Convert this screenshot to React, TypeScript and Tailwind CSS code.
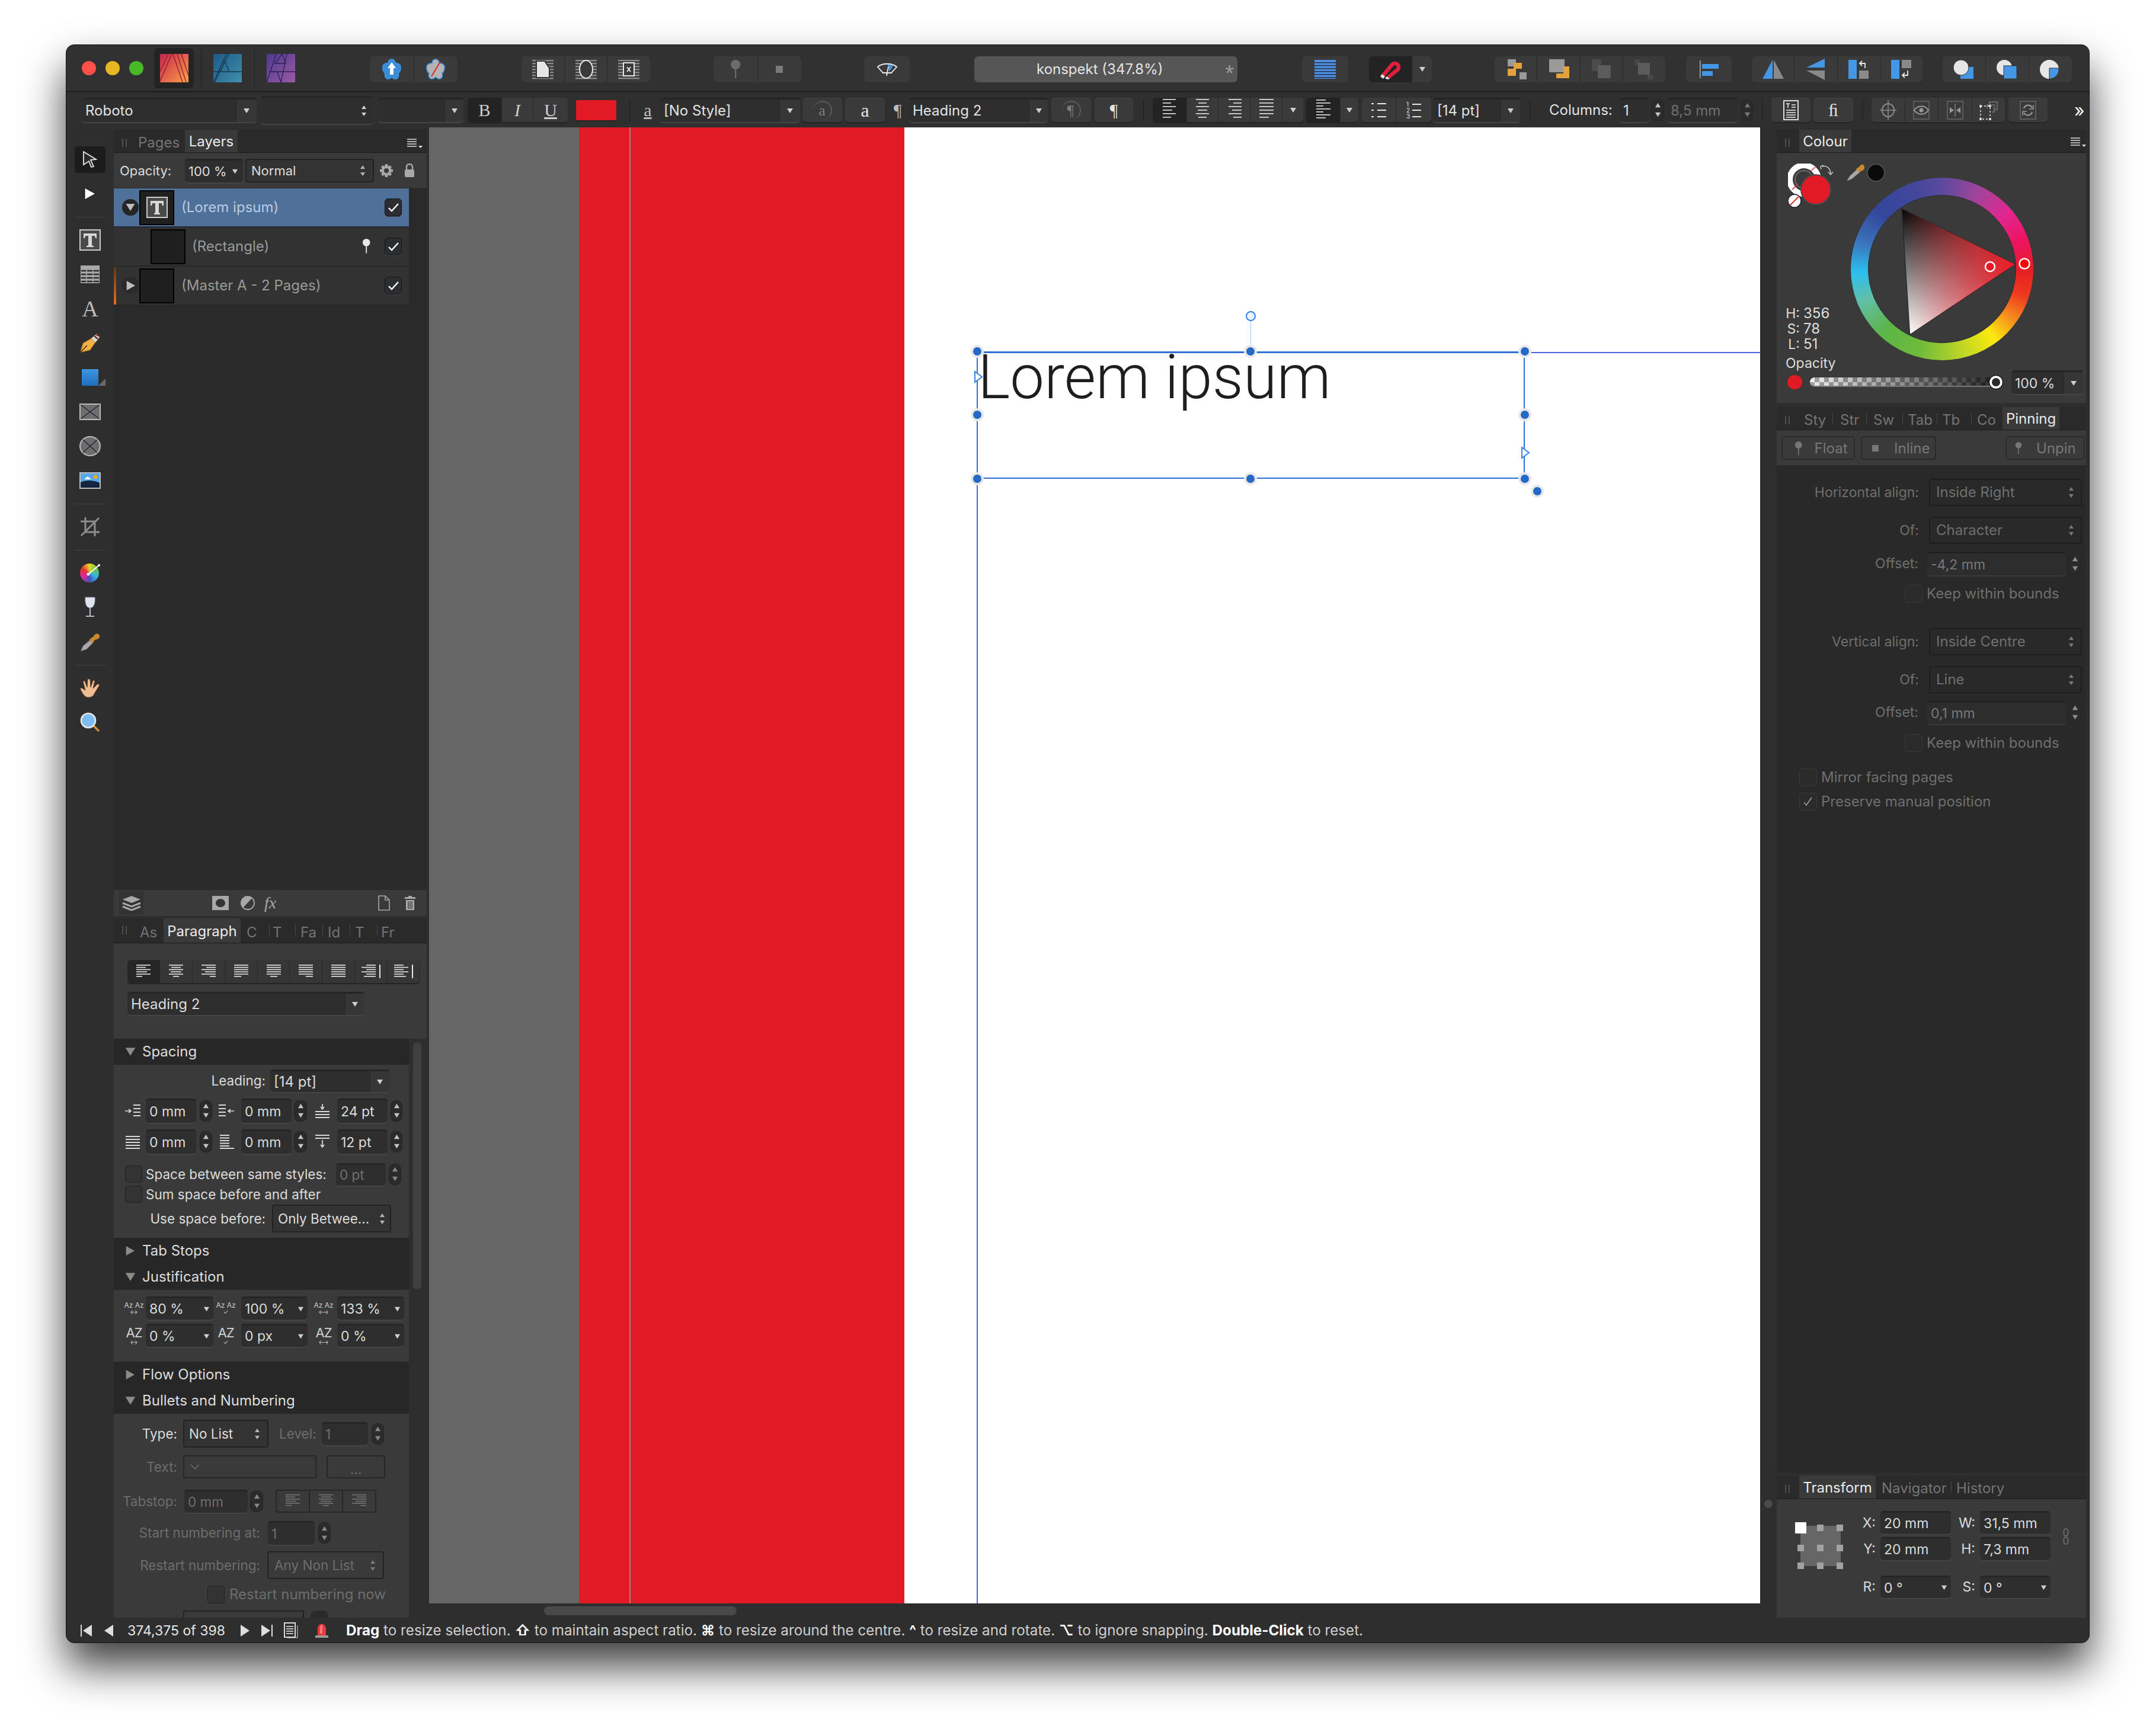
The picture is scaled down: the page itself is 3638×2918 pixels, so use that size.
import React from "react";

// small shared bits
const Tri = ({ className = "", up = false, c = "#cfcfcf", s = 12 }: any) => (
  <svg width={s} height={s} viewBox="0 0 12 12" className={className}>
    <path d={up ? "M6 2 L11 10 L1 10 Z" : "M1 2 L11 2 L6 10 Z"} fill={c} />
  </svg>
);

const Side = ({ c = "#bdbdbd", s = 20 }: any) => (
  <svg width={s} height={s} viewBox="0 0 20 20">
    <path d="M3 1 L19 10 L3 19 Z" fill={c} />
  </svg>
);

const Updown = ({ c = "#cfcfcf" }: any) => (
  <svg width="10" height="22" viewBox="0 0 10 22">
    <path d="M5 2 L9 8 L1 8 Z M1 14 L9 14 L5 20 Z" fill={c} />
  </svg>
);

const Stepper = ({ className = "", c = "#c4c4c4" }: any) => (
  <div className={"flex flex-col items-center justify-center gap-[5px] rounded-[9px] bg-[#2b2b2b] border border-[#242424] h-[36px] " + className}>
    <Tri up c={c} s={11} />
    <Tri c={c} s={11} />
  </div>
);

const Well = ({ className = "", children }: any) => (
  <div className={"flex items-center rounded-[5px] bg-[#2e2e2e] border-t-[3px] border-[#252525] shadow-[0_2px_0_#454545] overflow-hidden whitespace-nowrap " + className}>
    {children}
  </div>
);

const DropBox = ({ className = "", text, arrow = "w-[33px]", c = "" }: any) => (
  <Well className={className}>
    <span className={"flex-1 pl-[6px] " + c}>{text}</span>
    <span className={"flex h-full items-center justify-center bg-[#363636] border-l border-[#262626] " + arrow}><Tri /></span>
  </Well>
);

const Pop = ({ className = "", text, c = "" }: any) => (
  <div className={"flex items-center justify-between rounded-[4px] border-[2px] border-[#222] bg-[#333] pl-[8px] pr-[12px] whitespace-nowrap " + className}>
    <span className={c}>{text}</span>
    <Updown c="#b5b5b5" />
  </div>
);

const Check = ({ className = "", on = false, c = "#fff" }: any) => (
  <div className={"flex shrink-0 items-center justify-center rounded-[5px] bg-[#333] border border-[#202020] " + className}>
    {on && (
      <svg width="20" height="16" viewBox="0 0 20 16">
        <path d="M2 9 L7 14 L18 2" stroke={c} strokeWidth="2.4" fill="none" />
      </svg>
    )}
  </div>
);

const Pin = ({ c = "#e8e8e8", s = 1 }: any) => (
  <svg width={16 * s} height={28 * s} viewBox="0 0 16 28">
    <circle cx="8" cy="7" r="7" fill={c} />
    <rect x="7" y="12" width="2" height="15" fill={c} />
  </svg>
);

const Seg = ({ className = "", children, dark = false, last = false }: any) => (
  <div className={"flex h-full items-center justify-center " + (dark ? "bg-[#232323] " : "bg-[#3a3a3a] ") + (last ? "" : "border-r border-[#2a2a2a] ") + className}>
    {children}
  </div>
);

const TopGroup = ({ className = "", children }: any) => (
  <div className={"mt-[4px] flex h-[44px] overflow-hidden rounded-[7px] " + className}>{children}</div>
);

const LowBtn = ({ className = "", children }: any) => (
  <div className={"flex h-[41px] items-center justify-center rounded-[5px] bg-[#3a3a3a] border-t border-[#444] shadow-[0_2px_0_#242424] " + className}>{children}</div>
);

const VSep = ({ className = "" }: any) => <div className={"h-[38px] w-[1px] bg-[#1f1f1f] " + className} />;

const Lines = ({ widths, align = "l", c = "#e6e6e6", w = 24, step = 4, bar = false }: any) => (
  <svg width={bar ? w + 8 : w} height={step * widths.length + 1} viewBox={`0 0 ${bar ? w + 8 : w} ${step * widths.length + 1}`}>
    {widths.map((v: number, i: number) => {
      const x = align === "l" ? 0 : align === "c" ? (w - v) / 2 : w - v;
      return <rect key={i} x={x} y={i * step} width={v} height="1.6" fill={c} />;
    })}
    {bar && <rect x={w + 6} y="0" width="2" height={step * widths.length} fill={c} />}
  </svg>
);

const Wrap = ({ children }: any) => (
  <svg width="36" height="34" viewBox="0 0 36 34">
    {[1, 6, 11, 16, 21, 26, 31].map((y) => (
      <rect key={y} x="0" y={y} width="36" height="2.4" fill="#8a8a8a" />
    ))}
    {children}
  </svg>
);

const Box2 = ({ a, b, ac = "#9a9a9a", bc = "#e2a23e" }: any) => (
  <svg width="36" height="34" viewBox="0 0 36 34">
    {a.map((r: number[], i: number) => <rect key={i} x={r[0]} y={r[1]} width={r[2]} height={r[3]} fill={ac} />)}
    {b.map((r: number[], i: number) => <rect key={i} x={r[0]} y={r[1]} width={r[2]} height={r[3]} fill={bc} />)}
  </svg>
);

const Logo = ({ from, to, line, kind }: any) => (
  <svg width="48" height="48" viewBox="0 0 48 48">
    <defs>
      <linearGradient id={"lg" + kind} x1="0" y1="0" x2="1" y2="1">
        <stop offset="0" stopColor={from} />
        <stop offset="1" stopColor={to} />
      </linearGradient>
    </defs>
    <rect width="48" height="48" rx="1" fill={"url(#lg" + kind + ")"} />
    {kind === "p" && <path d="M0 30 L14 0 M0 46 L20 0 M22 0 L38 48 M29 0 L44 48 M36 0 L48 36" stroke={line} strokeWidth="1.3" fill="none" />}
    {kind === "d" && <path d="M0 48 L22 0 M26 0 L2 48 M0 30 H48 M12 30 L19 12 L27 30" stroke={line} strokeWidth="1.4" fill="none" />}
    {kind === "f" && <path d="M0 48 L16 0 M34 0 L24 48 M14 16 L26 0 L32 16 Z M4 30 H48 M18 30 L24 48" stroke={line} strokeWidth="1.4" fill="none" />}
  </svg>
);

const Flower = ({ fill, slash = false }: any) => (
  <svg width="38" height="36" viewBox="0 0 38 36">
    <path
      d="M19 1 C24 1 25 6 25 8 C31 7 35 11 34 17 C33 22 31 24 30 24 C32 31 28 35 24 34 C22 34 20 32 19 31 C18 32 16 34 14 34 C10 35 6 31 8 24 C7 24 5 22 4 17 C3 11 7 7 13 8 C13 6 14 1 19 1 Z"
      fill={fill}
      stroke="#3d95e4"
      strokeWidth="1.6"
    />
    {slash ? (
      <path d="M12 30 L27 5" stroke="#e02b2b" strokeWidth="2" />
    ) : (
      <path d="M19 6 L26 16 L22 16 L22 27 L16 27 L16 16 L12 16 Z" fill="#fff" />
    )}
  </svg>
);

const ToolCell = ({ children, active = false }: any) => (
  <div className="flex h-[58px] w-[80px] shrink-0 items-center justify-center">
    {active ? <div className="flex h-[45px] w-[52px] items-center justify-center rounded-[5px] bg-[#1c1c1c]">{children}</div> : children}
  </div>
);

const ToolSep = () => (
  <div className="ml-[14px] flex h-[20px] w-[52px] shrink-0 items-center">
    <div className="h-[1px] w-full bg-[#444]" />
  </div>
);

const ToolColumn = () => (
  <div className="flex w-[80px] shrink-0 flex-col pt-[25px]">
    <ToolCell active>
      <svg width="28" height="30" viewBox="0 0 28 30">
        <path d="M3 2 L24 15 L15 16 L20 27 L16 28 L12 18 L3 24 Z" fill="#2a2a2a" stroke="#e5e5e5" strokeWidth="1.8" />
      </svg>
    </ToolCell>
    <ToolCell>
      <svg width="20" height="22" viewBox="0 0 20 22"><path d="M1 1 L19 11 L1 21 Z" fill="#fff" stroke="#111" /></svg>
    </ToolCell>
    <ToolSep />
    <ToolCell>
      <svg width="36" height="36" viewBox="0 0 36 36">
        <rect x="1" y="1" width="34" height="34" fill="#4a4a4a" stroke="#ccc" strokeWidth="2" />
        <path d="M7 7 H29 V15 H27 L26 11 H21 V27 L24 28 V30 H12 V28 L15 27 V11 H10 L9 15 H7 Z" fill="#d8d8d8" />
      </svg>
    </ToolCell>
    <ToolCell>
      <svg width="32" height="30" viewBox="0 0 32 30">
        <rect width="32" height="30" fill="#a8a8a8" />
        <path d="M1 9 H31 M1 15 H31 M1 21 H31 M1 27 H31" stroke="#2a2a2a" strokeWidth="2.4" />
        <path d="M10 7 V30 M21 7 V30" stroke="#a8a8a8" strokeWidth="1.6" />
      </svg>
    </ToolCell>
    <ToolCell>
      <span className="text-[38px] leading-none text-[#bdbdbd] [font-family:'Liberation_Serif',serif]">A</span>
    </ToolCell>
    <ToolCell>
      <svg width="36" height="36" viewBox="0 0 36 36">
        <path d="M1 34 L6 18 L20 10 L27 17 L18 30 Z" fill="#efb045" stroke="#7a4f14" strokeWidth="1" />
        <path d="M1 34 L13 22" stroke="#3a2408" strokeWidth="1.5" />
        <path d="M20 10 L29 2 L35 7 L27 17 Z" fill="#d9d9d9" />
        <path d="M25 6 L31 11 M27 3 L35 7" stroke="#6e2a1c" strokeWidth="2.4" />
      </svg>
    </ToolCell>
    <ToolCell>
      <div className="relative">
        <div className="h-[28px] w-[28px] bg-[linear-gradient(#4096e0,#1f6fc0)]" />
        <div className="absolute left-[28px] top-[16px] h-0 w-0 border-b-[12px] border-l-[12px] border-b-[#6a6a6a] border-l-transparent" />
      </div>
    </ToolCell>
    <ToolCell>
      <svg width="36" height="28" viewBox="0 0 36 28">
        <rect x="1" y="1" width="34" height="26" fill="#6d6d6d" stroke="#bcbcbc" strokeWidth="2" />
        <path d="M2 2 L34 26 M34 2 L2 26" stroke="#1c2333" strokeWidth="1.3" />
      </svg>
    </ToolCell>
    <ToolCell>
      <svg width="36" height="34" viewBox="0 0 36 34">
        <ellipse cx="18" cy="17" rx="17" ry="16" fill="#6d6d6d" stroke="#bcbcbc" strokeWidth="2" />
        <path d="M6 6 L30 28 M30 6 L6 28" stroke="#1c2333" strokeWidth="1.3" />
      </svg>
    </ToolCell>
    <ToolCell>
      <svg width="36" height="28" viewBox="0 0 36 28">
        <rect x="1" y="1" width="34" height="26" fill="#56a8e6" stroke="#bcbcbc" strokeWidth="2" />
        <path d="M2 17 C10 13 24 13 34 18 V26 H2 Z" fill="#15243f" />
        <path d="M8 12 L14 7 L20 12 Z" fill="#fff" />
        <circle cx="27" cy="8" r="3.2" fill="#f3a91f" />
      </svg>
    </ToolCell>
    <ToolSep />
    <ToolCell>
      <svg width="34" height="34" viewBox="0 0 34 34">
        <path d="M9 1 V26 H33 M1 8 H25 V33 M2 32 L32 2" stroke="#8d8d8d" strokeWidth="3" fill="none" />
      </svg>
    </ToolCell>
    <ToolSep />
    <ToolCell>
      <div className="relative h-[32px] w-[34px]">
        <div className="h-[32px] w-[32px] rounded-full bg-[conic-gradient(#e5d52a,#6cc04a,#32b5e8,#4a4bb8,#d92c9a,#e5332a,#e5d52a)]" />
        <svg width="34" height="32" viewBox="0 0 34 32" className="absolute left-0 top-0">
          <path d="M14 18 L32 3" stroke="#fff" strokeWidth="2" />
          <circle cx="14" cy="18" r="2.5" fill="#fff" />
          <circle cx="32" cy="3" r="2" fill="#fff" />
        </svg>
      </div>
    </ToolCell>
    <ToolCell>
      <svg width="20" height="36" viewBox="0 0 20 36">
        <path d="M2 1 H18 C19 12 16 19 10 19 C4 19 1 12 2 1 Z" fill="#dfe3ee" stroke="#8a90a8" />
        <rect x="9" y="19" width="2" height="13" fill="#b7bdd0" />
        <rect x="3" y="32" width="14" height="2" fill="#b7bdd0" />
      </svg>
    </ToolCell>
    <ToolCell>
      <svg width="34" height="34" viewBox="0 0 34 34">
        <path d="M1 33 L5 24 L17 14 L22 19 L11 30 Z" fill="#a8a8a8" stroke="#555" />
        <path d="M16 13 L23 8 C25 2 33 2 33 8 C33 13 27 13 25 14 L21 20 Z" fill="#c98a2e" />
      </svg>
    </ToolCell>
    <ToolSep />
    <ToolCell>
      <svg width="36" height="36" viewBox="0 0 36 36">
        <path d="M11 33 C6 30 5 26 1 19 L4 18 L10 22 L6 7 L9 6 L13 17 L14 3 L18 3 L19 17 L23 5 L26 6 L23 19 L31 11 L34 13 L25 28 C23 34 15 35 11 33 Z" fill="#eebd93" stroke="#6b4322" strokeWidth="1" />
      </svg>
    </ToolCell>
    <ToolCell>
      <svg width="34" height="34" viewBox="0 0 34 34">
        <path d="M22 22 L32 32" stroke="#d98a3a" strokeWidth="3.5" />
        <circle cx="14" cy="14" r="12" fill="#7cbcf0" stroke="#e8e8e8" strokeWidth="2.6" />
      </svg>
    </ToolCell>
  </div>
);

const Grip = () => (
  <div className="ml-[14px] flex h-[14px] w-[8px] shrink-0 justify-between">
    <span className="w-[2px] bg-[#4f4f4f]" />
    <span className="w-[2px] bg-[#4f4f4f]" />
  </div>
);

const Menu = ({ className = "" }: any) => (
  <svg width="26" height="20" viewBox="0 0 26 20" className={className}>
    <path d="M0 2 H16 M0 6 H16 M0 10 H16 M0 14 H16" stroke="#e0e0e0" strokeWidth="1.5" />
    <path d="M19 13 H26 L22.5 17 Z" fill="#e0e0e0" />
  </svg>
);

const Tab = ({ className = "", children }: any) => (
  <div className={"shrink-0 whitespace-nowrap text-[24px] text-[#747474] " + className}>{children}</div>
);
const TabOn = ({ className = "", children }: any) => (
  <div className={"flex h-full shrink-0 items-center justify-center whitespace-nowrap bg-[#3a3a3a] pt-[2px] text-[24px] text-[#eaeaea] " + className}>{children}</div>
);
const TabLine = ({ className = "" }: any) => <div className={"h-[18px] w-[1px] shrink-0 self-start mt-[10px] bg-[#4a4a4a] " + className} />;

const Thumb = ({ className = "", children }: any) => (
  <div className={"flex h-[59px] w-[59px] shrink-0 items-center justify-center bg-[#1f1f1f] border-[2px] border-black " + className}>{children}</div>
);

const Disc = ({ down = false, c = "#252525" }: any) => (
  <div className={"flex h-[28px] w-[28px] items-center justify-center rounded-full " + (c === "#252525" ? "bg-[#252525]" : "bg-[#2a2a2a]")}>
    {down ? <Tri c="#bdbdbd" s={18} /> : <Side s={18} />}
  </div>
);

const LayerCheck = ({ className = "" }: any) => <Check on className={"h-[30px] w-[29px] rounded-[6px] !bg-[#2b2d31] !border-[#151515] shadow-[0_1px_0_#4a4a4a] " + className} />;

const LayersPanel = () => (
  <div className="flex flex-1 flex-col">
    <div className="flex h-[39px] items-end bg-[#2a2a2a] border-b border-[#1c1c1c]">
      <div className="mb-[9px]"><Grip /></div>
      <Tab className="ml-[19px] w-[79px] pb-[2px]">Pages</Tab>
      <TabOn className="w-[89px]">Layers</TabOn>
      <Menu className="mb-[4px] ml-[286px]" />
    </div>
    <div className="flex h-[60px] items-center bg-[#3a3a3a] border-b border-[#2a2a2a] text-[22px]">
      <span className="ml-[10px] w-[110px] text-[#dcdcdc]">Opacity:</span>
      <Well className="h-[40px] w-[98px] justify-between pl-[6px] pr-[8px]">
        <span className="w-[68px]">100 %</span>
        <Tri s={11} />
      </Well>
      <Pop text="Normal" className="ml-[4px] h-[40px] w-[217px]" />
      <svg width="24" height="24" viewBox="0 0 24 24" className="ml-[9px]">
        <path d="M10 1 H14 L15 5 L18 3 L21 6 L19 9 L23 10 V14 L19 15 L21 18 L18 21 L15 19 L14 23 H10 L9 19 L6 21 L3 18 L5 15 L1 14 V10 L5 9 L3 6 L6 3 L9 5 Z M12 8 A4 4 0 1 0 12 16 A4 4 0 1 0 12 8 Z" fill="#a8a8a8" fillRule="evenodd" />
      </svg>
      <svg width="18" height="24" viewBox="0 0 18 24" className="ml-[18px]">
        <path d="M4 10 V6 A5 5 0 0 1 14 6 V10" stroke="#a8a8a8" strokeWidth="2.5" fill="none" />
        <rect x="1" y="10" width="16" height="13" rx="2" fill="#a8a8a8" />
      </svg>
    </div>
    <div className="flex-1 bg-[#2a2a2a] text-[24px]">
      <div className="w-[498px]">
        <div className="flex h-[66px] items-center bg-[#4f7099] border-b-[2px] border-[#232a33] pl-[14px]">
          <Disc down />
          <Thumb className="ml-[1px]">
            <svg width="36" height="36" viewBox="0 0 36 36">
              <rect x="1" y="1" width="34" height="34" fill="#4a4a4a" stroke="#ccc" strokeWidth="2" />
              <path d="M7 7 H29 V15 H27 L26 11 H21 V27 L23 28 V30 H13 V28 L15 27 V11 H10 L9 15 H7 Z" fill="#d8d8d8" />
            </svg>
          </Thumb>
          <span className="ml-[12px] w-[343px] text-[#b9cbe2]">(Lorem ipsum)</span>
          <LayerCheck />
        </div>
        <div className="flex h-[66px] items-center bg-[#323232] border-b-[2px] border-[#272727] pl-[62px]">
          <Thumb />
          <span className="ml-[11px] w-[287px] text-[#9a9a9a]">(Rectangle)</span>
          <Pin s={0.9} />
          <LayerCheck className="ml-[24px]" />
        </div>
        <div className="flex h-[66px] items-center bg-[#323232] border-b-[2px] border-[#272727]">
          <div className="h-full w-[4px] bg-[linear-gradient(#5a3a20,#f06a10)]" />
          <div className="ml-[10px]"><Disc c="#2a2a2a" /></div>
          <Thumb className="ml-[1px]" />
          <span className="ml-[12px] w-[343px] text-[#9a9a9a]">(Master A - 2 Pages)</span>
          <LayerCheck />
        </div>
      </div>
    </div>
    <div className="flex h-[45px] items-center bg-[#3a3a3a] border-t border-[#2a2a2a]">
      <div className="ml-[9px] flex h-[40px] w-[41px] items-center justify-center bg-[#333]">
        <svg width="32" height="26" viewBox="0 0 32 26">
          <path d="M1 7 L16 1 L31 7 L16 13 Z" fill="#a8a8a8" />
          <path d="M1 13 L16 19 L31 13 M1 19 L16 25 L31 19" stroke="#a8a8a8" strokeWidth="3" fill="none" />
        </svg>
      </div>
      <svg width="28" height="24" viewBox="0 0 28 24" className="ml-[116px]">
        <rect width="28" height="24" fill="#a8a8a8" />
        <ellipse cx="14" cy="12" rx="8" ry="7" fill="#333" />
      </svg>
      <svg width="24" height="24" viewBox="0 0 24 24" className="ml-[20px]">
        <circle cx="12" cy="12" r="11" fill="none" stroke="#a8a8a8" strokeWidth="1.8" />
        <path d="M12 1 A11 11 0 0 0 4 20 L19 4 A11 11 0 0 0 12 1 Z" fill="#a8a8a8" />
      </svg>
      <span className="ml-[8px] w-[36px] text-center text-[28px] italic leading-none text-[#a8a8a8] [font-family:'Liberation_Serif',serif]">fx</span>
      <svg width="20" height="26" viewBox="0 0 20 26" className="ml-[164px]">
        <path d="M1 1 H12 L19 8 V25 H1 Z M12 1 V8 H19" fill="none" stroke="#a8a8a8" strokeWidth="1.6" />
      </svg>
      <svg width="18" height="26" viewBox="0 0 18 26" className="ml-[25px]">
        <path d="M6 1 H12 V3 H18 V6 H0 V3 H6 Z M2 8 H16 V25 H2 Z" fill="#a8a8a8" />
        <path d="M6 10 V23 M9 10 V23 M12 10 V23" stroke="#3a3a3a" strokeWidth="1.4" />
      </svg>
    </div>
  </div>
);

const SpaceIcon = ({ k }: any) => {
  const L = [0, 6, 12, 18].map((y) => <rect key={y} x={k === "r" || k === "lb" ? 0 : 14} y={y + (k === "s" ? 12 : 2)} width="12" height="2" fill="#d8d8d8" />);
  return (
    <svg width="26" height="26" viewBox="0 0 26 26" className="shrink-0">
      {k === "l" && <>{L}<path d="M0 13 H9 M6 10 L10 13 L6 16" stroke="#d8d8d8" strokeWidth="1.6" fill="none" /></>}
      {k === "r" && <>{L}<path d="M26 13 H17 M20 10 L16 13 L20 16" stroke="#d8d8d8" strokeWidth="1.6" fill="none" /></>}
      {k === "a" && <path d="M13 1 V8 M10 6 L13 10 L16 6 M1 14 H25 M1 19 H25 M1 24 H25" stroke="#d8d8d8" strokeWidth="1.8" fill="none" />}
      {k === "f" && <path d="M1 4 H25 M1 9 H25 M1 14 H25 M1 19 H25 M1 24 H25" stroke="#d8d8d8" strokeWidth="1.8" />}
      {k === "lb" && <path d="M2 2 H18 M2 6.5 H18 M2 11 H18 M2 15.5 H18 M2 20 H18 M2 24 H26" stroke="#d8d8d8" strokeWidth="1.8" />}
      {k === "b" && <path d="M1 2 H25 M1 7 H25 M13 10 V21 M10 18 L13 22 L16 18" stroke="#d8d8d8" strokeWidth="1.8" fill="none" />}
    </svg>
  );
};

const JustIcon = ({ mark = "", big = false }: any) => (
  <div className="flex w-[30px] shrink-0 flex-col items-center leading-none text-[#d0d0d0]">
    <span className={big ? "text-[22px] tracking-[-1px]" : "text-[12px] tracking-[0px] whitespace-nowrap"}>{big ? "AZ" : "Az Az"}</span>
    <span className="text-[10px] leading-[10px]">{mark}</span>
  </div>
);

const Arrowed = ({ className = "", text }: any) => (
  <Well className={"h-[39px] justify-between px-[6px] " + className}>
    <span className="text-[#dcdcdc]">{text}</span>
    <Tri s={11} />
  </Well>
);

const Sect = ({ title, open = false }: any) => (
  <div className="flex h-[44px] items-center bg-[#272727] pl-[18px] text-[24px] text-[#dedede]">
    <span className="flex w-[30px]">{open ? <Tri c="#8a8a8a" s={20} /> : <Side c="#8a8a8a" s={18} />}</span>
    {title}
  </div>
);

const aligns: any[] = [
  { w: [24, 16, 24, 18, 24, 10], a: "l" },
  { w: [24, 16, 24, 18, 24, 10], a: "c" },
  { w: [24, 16, 24, 18, 24, 10], a: "r" },
  { w: [24, 24, 24, 24, 24, 12], a: "l" },
  { w: [24, 24, 24, 24, 24, 12], a: "c" },
  { w: [24, 24, 24, 24, 24, 12], a: "r" },
  { w: [24, 24, 24, 24, 24, 24], a: "l" },
  { w: [16, 24, 16, 24, 16, 20], a: "r", bar: true },
  { w: [16, 24, 16, 24, 16, 20], a: "l", bar: true },
];

const ParagraphPanel = () => (
  <div className="flex flex-col">
    <div className="flex h-[42px] items-end bg-[#2a2a2a] border-b border-[#1c1c1c]">
      <div className="mb-[14px]"><Grip /></div>
      <Tab className="ml-[22px] w-[40px] pb-[3px]">As</Tab>
      <TabOn className="w-[130px]">Paragraph</TabOn>
      <Tab className="ml-[10px] w-[38px] pb-[3px]">C</Tab>
      <TabLine />
      <Tab className="ml-[5px] w-[38px] pb-[3px]">T</Tab>
      <TabLine />
      <Tab className="ml-[8px] w-[37px] pb-[3px]">Fa</Tab>
      <TabLine />
      <Tab className="ml-[8px] w-[37px] pb-[3px]">Id</Tab>
      <TabLine />
      <Tab className="ml-[8px] w-[37px] pb-[3px]">T</Tab>
      <TabLine />
      <Tab className="ml-[6px] pb-[3px]">Fr</Tab>
    </div>
    <div className="h-[161px] bg-[#3a3a3a] pl-[23px] pt-[28px]">
      <div className="flex h-[41px] w-[494px] overflow-hidden rounded-[6px] border-b-[2px] border-[#242424] bg-[#363636]">
        {aligns.map((v, i) => (
          <div key={i} className={"flex flex-1 items-center justify-center border-r border-[#282828] " + (i === 0 ? "bg-[#262626]" : "")}>
            <Lines widths={v.w} align={v.a} bar={v.bar} step={3.8} />
          </div>
        ))}
      </div>
      <DropBox text="Heading 2" className="mt-[13px] h-[39px] w-[400px] text-[24px]" arrow="w-[33px]" />
    </div>
  </div>
);

const ScrollPanel = () => (
  <div className="relative flex h-[977px] overflow-hidden">
    <div className="w-[498px] bg-[#3a3a3a]">
      <Sect open title="Spacing" />
      <div className="h-[292px] pt-[8px] text-[22.5px]">
        <div className="flex h-[38px] items-center">
          <span className="w-[264px] pr-[8px] text-right">Leading:</span>
          <DropBox text="[14 pt]" className="h-[38px] w-[201px] text-[24px]" />
        </div>
        {[["l", "0 mm", "r", "0 mm", "a", "24 pt"], ["f", "0 mm", "lb", "0 mm", "b", "12 pt"]].map((r, i) => (
          <div key={i} className="mt-[11px] flex h-[41px] items-center pl-[19px] text-[23px]">
            <SpaceIcon k={r[0]} />
            <Well className="ml-[9px] h-[41px] w-[85px] pl-[6px]">{r[1]}</Well>
            <Stepper className="ml-[6px] w-[21px]" />
            <div className="ml-[11px]"><SpaceIcon k={r[2]} /></div>
            <Well className="ml-[12px] h-[41px] w-[85px] pl-[6px]">{r[3]}</Well>
            <Stepper className="ml-[4px] w-[22px]" />
            <div className="ml-[13px]"><SpaceIcon k={r[4]} /></div>
            <Well className="ml-[12px] h-[41px] w-[85px] pl-[6px]">{r[5]}</Well>
            <Stepper className="ml-[5px] w-[20px]" />
          </div>
        ))}
        <div className="mt-[20px] flex h-[29px] items-center pl-[19px]">
          <Check className="h-[29px] w-[29px]" />
          <span className="ml-[6px] w-[321px] whitespace-nowrap">Space between same styles:</span>
          <Well className="h-[38px] w-[84px] pl-[6px] text-[#707070]">0 pt</Well>
          <Stepper className="ml-[5px] w-[21px]" c="#888" />
        </div>
        <div className="mt-[5px] flex h-[29px] items-center pl-[19px]">
          <Check className="h-[29px] w-[29px]" />
          <span className="ml-[6px] whitespace-nowrap">Sum space before and after</span>
        </div>
        <div className="mt-[3px] flex h-[47px] items-center">
          <span className="w-[256px] whitespace-nowrap text-right">Use space before:</span>
          <Pop text="Only Betwee..." className="ml-[11px] h-[47px] w-[201px] !pr-[8px]" />
        </div>
      </div>
      <Sect title="Tab Stops" />
      <Sect open title="Justification" />
      <div className="h-[121px] pl-[19px] pt-[11px]">
        {[["↔", "80 %", "✓", "100 %", "⟷", "133 %"], ["↔", "0 %", "✓", "0 px", "⟷", "0 %"]].map((r, i) => (
          <div key={i} className={"flex h-[39px] items-center " + (i ? "mt-[7px]" : "")}>
            <JustIcon mark={r[0]} big={i === 1} />
            <Arrowed text={r[1]} className="ml-[5px] w-[114px]" />
            <div className="ml-[6px]"><JustIcon mark={r[2]} big={i === 1} /></div>
            <Arrowed text={r[3]} className="ml-[11px] w-[112px]" />
            <div className="ml-[12px]"><JustIcon mark={r[4]} big={i === 1} /></div>
            <Arrowed text={r[5]} className="ml-[8px] w-[113px]" />
          </div>
        ))}
      </div>
      <Sect title="Flow Options" />
      <Sect open title="Bullets and Numbering" />
      <div className="pt-[10px] text-[22.5px] text-[#6d6d6d]">
        <div className="flex h-[47px] items-center">
          <span className="w-[107px] text-right text-[#dcdcdc]">Type:</span>
          <Pop text="No List" c="text-[#dcdcdc]" className="ml-[10px] h-[47px] w-[144px]" />
          <span className="ml-[18px] w-[60px]">Level:</span>
          <Well className="ml-[12px] h-[39px] w-[78px] pl-[6px]">1</Well>
          <Stepper className="ml-[6px] w-[21px]" c="#888" />
        </div>
        <div className="mt-[13px] flex h-[39px] items-center">
          <span className="w-[107px] text-right">Text:</span>
          <div className="ml-[10px] flex h-[39px] w-[225px] items-center border-[2px] border-[#262626] pl-[10px]">
            <svg width="16" height="10" viewBox="0 0 16 10"><path d="M1 1 L8 8 L15 1" stroke="#6d6d6d" strokeWidth="1.6" fill="none" /></svg>
          </div>
          <div className="ml-[17px] flex h-[39px] w-[99px] items-end justify-center rounded-[4px] border-[2px] border-[#282828] leading-[26px]">...</div>
        </div>
        <div className="mt-[19px] flex h-[39px] items-center">
          <span className="w-[107px] text-right">Tabstop:</span>
          <Well className="ml-[12px] h-[39px] w-[107px] pl-[6px]">0 mm</Well>
          <Stepper className="ml-[4px] w-[22px]" c="#888" />
          <div className="ml-[21px] flex h-[39px] w-[170px] rounded-[4px] border-[2px] border-[#282828]">
            {["l", "c", "r"].map((a) => (
              <div key={a} className="flex flex-1 items-center justify-center border-r-[2px] border-[#282828] last:border-r-0">
                <Lines widths={[24, 16, 24, 18, 24, 10]} align={a} c="#757575" step={3.6} />
              </div>
            ))}
          </div>
        </div>
        <div className="mt-[14px] flex h-[40px] items-center">
          <span className="w-[247px] whitespace-nowrap text-right">Start numbering at:</span>
          <Well className="ml-[13px] h-[40px] w-[79px] pl-[6px]">1</Well>
          <Stepper className="ml-[6px] w-[21px]" c="#888" />
        </div>
        <div className="mt-[11px] flex h-[47px] items-center">
          <span className="w-[247px] whitespace-nowrap text-right">Restart numbering:</span>
          <div className="ml-[12px] flex h-[47px] w-[197px] items-center justify-between rounded-[4px] border-[2px] border-[#222] pl-[10px] pr-[12px]">
            Any Non List
            <Updown c="#7a7a7a" />
          </div>
        </div>
        <div className="mt-[11px] flex h-[30px] items-center pl-[158px]">
          <Check className="h-[30px] w-[29px]" />
          <span className="ml-[8px] whitespace-nowrap text-[24px]">Restart numbering now</span>
        </div>
        <div className="mt-[12px] flex h-[40px] pl-[117px]">
          <div className="h-[40px] w-[204px] border-[2px] border-[#222]" />
          <div className="ml-[11px] h-[40px] w-[30px] rounded-[9px] bg-[#2a2a2a]" />
        </div>
      </div>
    </div>
    <div className="flex w-[30px] justify-center bg-[#2e2e2e] pt-[6px]">
      <div className="ml-[-2px] h-[417px] w-[14px] rounded-full bg-[#404040]" />
    </div>
  </div>
);

const ColourPanel = () => (
  <div className="relative h-[422px] bg-[#3a3a3a]">
    <div className="flex h-[93px] items-start pl-[19px] pt-[18px]">
      <svg width="76" height="76" viewBox="0 0 76 76" className="shrink-0">
        <circle cx="27" cy="27" r="24" fill="none" stroke="#fff" strokeWidth="10" />
        <circle cx="27" cy="27" r="15" fill="none" stroke="#6b6b6b" strokeWidth="2" />
        <path d="M7 44 L17 34 M39 12 L46 6" stroke="#e02b2b" strokeWidth="1.6" />
        <circle cx="47" cy="44" r="25" fill="#e21a26" stroke="#4a4a4a" strokeWidth="2" />
        <circle cx="11" cy="63" r="11" fill="#fff" stroke="#222" strokeWidth="1.5" />
        <path d="M4 70 L18 56" stroke="#e02b2b" strokeWidth="2" />
      </svg>
      <svg width="24" height="28" viewBox="0 0 24 28" className="ml-[-22px] mt-[1px] shrink-0">
        <path d="M4 4 C11 1 18 8 18 16 M18 18 L14 13 M18 18 L22 13 M2 9 L1 4 L6 2" stroke="#c8c8c8" strokeWidth="1.4" fill="none" />
      </svg>
      <svg width="32" height="30" viewBox="0 0 32 30" className="ml-[20px] mt-[1px] shrink-0">
        <path d="M1 29 L6 20 L18 9 L23 14 L10 25 Z" fill="#a8a8a8" stroke="#555" />
        <path d="M17 8 L23 4 C25 -1 32 0 31 6 C31 11 25 11 24 13 L22 15 Z" fill="#c98a2e" />
      </svg>
      <div className="ml-[3px] h-[31px] w-[31px] shrink-0 rounded-full bg-[#0a0a0a] border-[2px] border-[#4c4c4c]" />
    </div>
    <div className="mt-[165px] flex flex-col pl-[15px] leading-[26px] text-[#dedede]">
      <div className="flex"><span className="w-[24px] text-right">H:</span><span className="ml-[6px] text-[24px]">356</span></div>
      <div className="flex"><span className="w-[24px] text-right">S:</span><span className="ml-[6px] text-[24px]">78</span></div>
      <div className="flex"><span className="w-[24px] text-right">L:</span><span className="ml-[6px] text-[24px]">51</span></div>
      <span className="mt-[6px]">Opacity</span>
    </div>
    <div className="mt-[-1px] flex items-center pl-[18px]">
      <div className="h-[24px] w-[25px] rounded-full bg-[#e21a26]" />
      <div className="relative ml-[13px] h-[16px] w-[313px] rounded-full bg-[linear-gradient(90deg,#efefef,#2c2c2c)] overflow-hidden border-b-[2px] border-[#777]">
        <div className="h-full w-full bg-[repeating-conic-gradient(rgba(0,0,0,0.32)_0_25%,transparent_0_50%)] bg-[length:16px_16px]" />
      </div>
      <div className="ml-[-10px] z-10 h-[22px] w-[22px] rounded-full border-[4px] border-white bg-[#2a2a2a] outline outline-1 outline-black" />
      <Well className="ml-[15px] h-[40px] w-[121px]">
        <span className="flex-1 pl-[6px]">100 %</span>
        <span className="flex h-full w-[33px] items-center justify-center bg-[#363636] border-l border-[#262626]"><Tri /></span>
      </Well>
    </div>
    <div className="absolute left-[125px] top-[42px] flex h-[308px] w-[308px] items-center justify-center rounded-full bg-[conic-gradient(#5b4a9e_0deg,#a0449a_25deg,#e3258f_50deg,#ec1463_70deg,#e81c25_90deg,#ee3a1f_108deg,#f58a1e_125deg,#fbe90f_143deg,#b4d22a_170deg,#6fbb3b_195deg,#5cb546_222deg,#62bfa6_248deg,#2bbff0_268deg,#3a74ba_288deg,#33469b_312deg,#42479b_340deg,#5b4a9e_360deg)]">
      <div className="h-[250px] w-[250px] rounded-full bg-[#3a3a3a] border border-[#2a2a2a]" />
      <svg width="308" height="308" viewBox="0 0 308 308" className="absolute left-0 top-0">
        <defs>
          <linearGradient id="edge" gradientUnits="userSpaceOnUse" x1="86" y1="52" x2="99.5" y2="265">
            <stop offset="0" stopColor="#050505" />
            <stop offset="1" stopColor="#fff" />
          </linearGradient>
          <linearGradient id="hue" gradientUnits="userSpaceOnUse" x1="277" y1="146" x2="93" y2="158">
            <stop offset="0" stopColor="#ee1a24" />
            <stop offset="1" stopColor="#ee1a24" stopOpacity="0" />
          </linearGradient>
        </defs>
        <path d="M86 52 L277 146 L99.5 265 Z" fill="url(#edge)" stroke="#2a2a2a" strokeWidth="1.5" />
        <path d="M86 52 L277 146 L99.5 265 Z" fill="url(#hue)" />
        <circle cx="235" cy="150" r="8" fill="#e21a26" stroke="#fff" strokeWidth="2.5" />
        <circle cx="293" cy="145" r="8.5" fill="#f00" stroke="#fff" strokeWidth="2.5" />
      </svg>
    </div>
  </div>
);

const PinBtn = ({ className = "", children }: any) => (
  <div className={"flex h-[40px] items-center rounded-[5px] border-[2px] border-[#2a2a2a] pt-[2px] text-[24px] text-[#777] " + className}>{children}</div>
);

const PopDim = ({ text, className = "" }: any) => (
  <div className={"flex h-[46px] w-[258px] items-center justify-between rounded-[4px] border-[2px] border-[#1e1e1e] pl-[10px] pr-[11px] text-[24px] text-[#6f6f6f] " + className}>
    {text}
    <Updown c="#7a7a7a" />
  </div>
);

const PinRow = ({ label, className = "", text }: any) => (
  <div className={"flex h-[46px] items-center " + className}>
    <span className="w-[240px] text-right text-[#6f6f6f]">{label}</span>
    <PopDim text={text} className="ml-[17px]" />
  </div>
);

const OffsetRow = ({ text, className = "" }: any) => (
  <div className={"flex h-[40px] items-center " + className}>
    <span className="w-[239px] text-right text-[#6f6f6f]">Offset:</span>
    <div className="ml-[15px] flex h-[40px] w-[234px] items-center rounded-[5px] border-t-[3px] border-[#212121] bg-[#2d2d2d] pl-[6px] text-[#787878] shadow-[0_2px_0_#3a3a3a]">{text}</div>
    <Stepper className="ml-[6px] w-[19px]" c="#909090" />
  </div>
);

const DimCheck = ({ label, on = false, className = "" }: any) => (
  <div className={"flex h-[30px] items-center whitespace-nowrap text-[24px] text-[#6f6f6f] " + className}>
    <div className="flex h-[30px] w-[30px] items-center justify-center rounded-[5px] border border-[#3a3a3a] bg-[#2b2b2b]">
      {on && (
        <svg width="18" height="18" viewBox="0 0 18 18"><path d="M2 10 L6 15 L15 2" stroke="#a0a0a0" strokeWidth="1.6" fill="none" /></svg>
      )}
    </div>
    <span className="ml-[7px]">{label}</span>
  </div>
);

const RightPanel = () => (
  <div className="flex w-[522px] shrink-0 flex-col pt-[4px]">
    <div className="flex h-[39px] items-end bg-[#2a2a2a] border-b border-[#1c1c1c]">
      <div className="mb-[9px]"><Grip /></div>
      <TabOn className="ml-[16px] w-[88px]">Colour</TabOn>
      <Menu className="mb-[6px] ml-[370px]" />
    </div>
    <ColourPanel />
    <div className="h-[7px] bg-[#2e2e2e]" />
    <div className="flex h-[39px] items-end bg-[#2a2a2a] border-b border-[#1c1c1c]">
      <div className="mb-[9px]"><Grip /></div>
      <Tab className="ml-[24px] w-[48px] pb-[2px]">Sty</Tab>
      <TabLine />
      <Tab className="ml-[12px] w-[44px] pb-[2px]">Str</Tab>
      <TabLine />
      <Tab className="ml-[11px] w-[49px] pb-[2px]">Sw</Tab>
      <TabLine />
      <Tab className="ml-[8px] w-[49px] pb-[2px]">Tab</Tab>
      <TabLine />
      <Tab className="ml-[8px] w-[49px] pb-[2px]">Tb</Tab>
      <TabLine />
      <Tab className="ml-[9px] w-[43px] pb-[2px]">Co</Tab>
      <TabOn className="w-[96px]">Pinning</TabOn>
    </div>
    <div className="flex h-[61px] items-center bg-[#3a3a3a] border-b-[2px] border-[#2a2a2a] pl-[8px]">
      <PinBtn className="w-[124px] pl-[20px]"><Pin c="#777" s={0.85} /><span className="ml-[20px]">Float</span></PinBtn>
      <PinBtn className="ml-[10px] w-[127px] pl-[17px]"><span className="h-[11px] w-[11px] bg-[#777]" /><span className="ml-[26px]">Inline</span></PinBtn>
      <PinBtn className="ml-[117px] w-[134px] pl-[14px]"><Pin c="#777" s={0.75} /><span className="ml-[24px]">Unpin</span></PinBtn>
    </div>
    <div className="flex h-[1699px] flex-col bg-[#292929] pt-[21px]">
      <PinRow label="Horizontal align:" text="Inside Right" />
      <PinRow label="Of:" text="Character" className="mt-[18px]" />
      <OffsetRow text="-4,2 mm" className="mt-[13px]" />
      <DimCheck label="Keep within bounds" className="ml-[216px] mt-[16px]" />
      <PinRow label="Vertical align:" text="Inside Centre" className="mt-[43px]" />
      <PinRow label="Of:" text="Line" className="mt-[18px]" />
      <OffsetRow text="0,1 mm" className="mt-[12px]" />
      <DimCheck label="Keep within bounds" className="ml-[216px] mt-[17px]" />
      <DimCheck label="Mirror facing pages" className="ml-[38px] mt-[28px]" />
      <DimCheck label="Preserve manual position" on className="ml-[38px] mt-[11px]" />
    </div>
    <div className="h-[4px] bg-[#2e2e2e]" />
    <div className="flex h-[40px] items-end bg-[#2a2a2a] border-b border-[#1c1c1c]">
      <div className="mb-[9px]"><Grip /></div>
      <TabOn className="ml-[16px] w-[129px]">Transform</TabOn>
      <Tab className="ml-[10px] w-[117px] pb-[3px]">Navigator</Tab>
      <TabLine />
      <Tab className="ml-[8px] pb-[3px]">History</Tab>
    </div>
    <div className="flex h-[200px] bg-[#3a3a3a] pl-[24px] pt-[20px]">
      <div className="mt-[9px] grid h-[99px] w-[99px] grid-cols-3 place-items-center bg-[linear-gradient(#666,#666)] bg-[length:68px_68px] bg-center bg-no-repeat">
        <div className="h-[19px] w-[19px] bg-white" />
        <div className="h-[11px] w-[11px] bg-[#a2a2a2]" />
        <div className="h-[11px] w-[11px] bg-[#a2a2a2]" />
        <div className="h-[11px] w-[11px] bg-[#a2a2a2]" />
        <div className="h-[11px] w-[11px] bg-[#a2a2a2]" />
        <div className="h-[11px] w-[11px] bg-[#a2a2a2]" />
        <div className="h-[11px] w-[11px] bg-[#a2a2a2]" />
        <div className="h-[11px] w-[11px] bg-[#a2a2a2]" />
        <div className="h-[11px] w-[11px] bg-[#a2a2a2]" />
      </div>
      <div className="ml-[14px] flex flex-col">
        {[["X:", "20 mm", "W:", "31,5 mm"], ["Y:", "20 mm", "H:", "7,3 mm"]].map((r, i) => (
          <div key={i} className={"flex h-[39px] items-center " + (i ? "mt-[5px]" : "")}>
            <span className="w-[30px] text-right">{r[0]}</span>
            <Well className="ml-[8px] h-[39px] w-[119px] pl-[6px]">{r[1]}</Well>
            <span className="ml-[8px] w-[33px] text-right">{r[2]}</span>
            <Well className="ml-[8px] h-[39px] w-[119px] pl-[6px]">{r[3]}</Well>
          </div>
        ))}
        <div className="mt-[26px] flex h-[38px] items-center">
          <span className="w-[30px] text-right">R:</span>
          <Arrowed text="0 °" className="ml-[8px] !h-[38px] w-[119px]" />
          <span className="ml-[8px] w-[33px] text-right">S:</span>
          <Arrowed text="0 °" className="ml-[8px] !h-[38px] w-[119px]" />
        </div>
      </div>
      <svg width="10" height="28" viewBox="0 0 10 28" className="ml-[21px] mt-[29px]">
        <rect x="1.5" y="1" width="7" height="12" rx="3.5" fill="none" stroke="#777" strokeWidth="1.6" />
        <rect x="1.5" y="15" width="7" height="12" rx="3.5" fill="none" stroke="#777" strokeWidth="1.6" />
      </svg>
    </div>
  </div>
);

const Handle = ({ className = "" }: any) => (
  <div className={"absolute z-10 h-[22px] w-[22px] rounded-full border-[4px] border-[#e8e8e8] bg-[#2468c8] " + className} />
);

const Canvas = () => (
  <div className="flex w-[2246px] shrink-0 flex-col">
    <div className="flex h-[2491px] overflow-hidden">
      <div className="w-[253px] bg-[#666666]" />
      <div className="flex w-[549px] justify-start bg-[#e21a26] pl-[85px]">
        <div className="h-full w-[2px] bg-[#a4868a]" />
      </div>
      <div className="relative flex-1 overflow-hidden bg-white">
        <div className="absolute inset-x-0 bottom-0 top-[-1px]">
          <div className="absolute left-[122px] top-[593px] bottom-0 w-[2px] bg-[#4d62e0]" />
          <div className="absolute left-[1046px] top-[380px] right-0 h-[2px] bg-[#4d62e0]" />
          <div className="absolute left-[122px] top-[379px] h-[215px] w-[925px] border-[2px] border-[#2f6fd8] border-t-[3px]" />
          <div className="absolute left-[584px] top-[325px] h-[54px] w-[1px] bg-[#a7c4f0]" />
          <span className="absolute left-[124px] top-[363px] whitespace-nowrap text-[103px] font-light leading-[120px] tracking-[0px] text-[#1e1e1e] [font-family:Roboto,sans-serif]">Lorem ipsum</span>
          <div className="absolute left-[576px] top-[311px] h-[17px] w-[17px] rounded-full border-[2px] border-[#2f7fe8] bg-[#eaf3ff]" />
          <Handle className="left-[112px] top-[368px]" />
          <Handle className="left-[573px] top-[368px]" />
          <Handle className="left-[1036px] top-[368px]" />
          <Handle className="left-[112px] top-[475px]" />
          <Handle className="left-[1036px] top-[475px]" />
          <Handle className="left-[112px] top-[583px]" />
          <Handle className="left-[573px] top-[583px]" />
          <Handle className="left-[1036px] top-[583px]" />
          <Handle className="left-[1057px] top-[604px]" />
          <svg width="16" height="22" viewBox="0 0 16 22" className="absolute left-[117px] top-[411px]">
            <path d="M2 2 L14 11 L2 20 Z" fill="#fff" stroke="#3584e8" strokeWidth="2" />
          </svg>
          <svg width="16" height="22" viewBox="0 0 16 22" className="absolute left-[1040px] top-[539px]">
            <path d="M2 2 L14 11 L2 20 Z" fill="#fff" stroke="#3584e8" strokeWidth="2" />
          </svg>
        </div>
      </div>
    </div>
    <div className="h-[24px] pl-[194px] pt-[5px]">
      <div className="h-[15px] w-[325px] rounded-full bg-[#4a4a4a]" />
    </div>
  </div>
);

const TopBar = () => (
  <div className="flex h-[77px] items-center pl-[26px] pt-[5px] pb-[4px] bg-[#313131]">
    <div className="flex gap-[16px]">
      <span className="h-[24px] w-[24px] rounded-full bg-[#ff5148]" />
      <span className="h-[24px] w-[24px] rounded-full bg-[#e6b71f]" />
      <span className="h-[24px] w-[24px] rounded-full bg-[#4ab928]" />
    </div>
    <div className="ml-[18px] flex h-[68px] w-[67px] items-center justify-center rounded-[6px] bg-[#232323]">
      <Logo kind="p" from="#c4254a" to="#ff9f4a" line="#8a2030" />
    </div>
    <div className="ml-[12px] h-[68px] w-[1px] bg-[#222]" />
    <div className="ml-[20px]"><Logo kind="d" from="#1e5a86" to="#3f8fae" line="#17384f" /></div>
    <div className="ml-[21px] h-[68px] w-[1px] bg-[#222]" />
    <div className="ml-[20px]"><Logo kind="f" from="#4e3a8c" to="#9a5aa6" line="#2e2158" /></div>
    <TopGroup className="ml-[126px] w-[148px]">
      <Seg className="flex-1"><Flower fill="#3b8cd8" /></Seg>
      <Seg className="flex-1" last><Flower fill="#b4b4b4" slash /></Seg>
    </TopGroup>
    <TopGroup className="ml-[108px] w-[217px]">
      <Seg className="flex-1">
        <Wrap><path d="M7 3 H21 L29 15 V31 H7 Z" fill="#e6e6e6" stroke="#313131" strokeWidth="2" /></Wrap>
      </Seg>
      <Seg className="flex-1">
        <Wrap><ellipse cx="18" cy="17" rx="11" ry="15" fill="#3a3a3a" stroke="#e6e6e6" strokeWidth="2" /></Wrap>
      </Seg>
      <Seg className="flex-1" last>
        <Wrap>
          <rect x="9" y="6" width="18" height="22" fill="#3a3a3a" stroke="#e6e6e6" strokeWidth="2" />
          <path d="M15 13 L21 21 M21 13 L15 21" stroke="#e6e6e6" strokeWidth="2" />
        </Wrap>
      </Seg>
    </TopGroup>
    <TopGroup className="ml-[107px] w-[148px]">
      <Seg className="flex-1"><Pin c="#6c6c6c" s={1.15} /></Seg>
      <Seg className="flex-1" last><span className="h-[12px] w-[12px] bg-[#7a7a7a]" /></Seg>
    </TopGroup>
    <TopGroup className="ml-[106px] w-[77px]">
      <Seg className="flex-1" last>
        <svg width="34" height="24" viewBox="0 0 34 24">
          <path d="M1 8 C8 1 26 1 33 8 L24 18 H10 Z" fill="none" stroke="#eee" strokeWidth="1.8" />
          <path d="M17 3 L27 6 L21 16 Z" fill="#4797e0" />
          <path d="M19 8 L16 23" stroke="#eee" strokeWidth="1.8" />
        </svg>
      </Seg>
    </TopGroup>
    <div className="ml-[109px] mt-[4px] flex h-[44px] w-[444px] items-center rounded-[7px] bg-[#565656] pl-[105px] pr-[6px] text-[24px] text-[#e4e4e4]">
      <span className="flex-1">konspekt (347.8%)</span>
      <span className="pt-[14px] text-[38px] leading-none text-[#9a9a9a] [font-family:'Liberation_Sans',sans-serif]">*</span>
    </div>
    <TopGroup className="ml-[109px] w-[78px]">
      <Seg className="flex-1" last>
        <svg width="36" height="32" viewBox="0 0 36 32">
          <rect width="36" height="32" fill="#4d8ddb" />
          {[4, 9, 14, 19, 24, 29].map((y) => <rect key={y} x="0" y={y} width="36" height="1.4" fill="#1f2e42" />)}
        </svg>
      </Seg>
    </TopGroup>
    <TopGroup className="ml-[35px] w-[106px]">
      <Seg dark last className="w-[73px]">
        <svg width="36" height="34" viewBox="0 0 36 34">
          <path d="M5 27 L21 8 A6.5 6.5 0 0 1 30 17 L13 31" fill="none" stroke="#e01f3d" strokeWidth="6.5" />
          <path d="M3 25 L8 29 L5 33 L0 29 Z M11 29 L16 33 L12 34 L8 32 Z" fill="#e8e8e8" />
        </svg>
      </Seg>
      <Seg last className="flex-1"><Tri /></Seg>
    </TopGroup>
    <TopGroup className="ml-[106px] w-[288px]">
      <Seg className="flex-1">
        <Box2 a={[[4, 0, 14, 12], [24, 22, 14, 12]]} b={[[14, 6, 14, 10], [4, 16, 14, 12]]} />
      </Seg>
      <Seg className="flex-1">
        <Box2 a={[[2, 0, 26, 22]]} b={[[26, 12, 10, 20], [14, 24, 22, 8]]} />
      </Seg>
      <Seg className="flex-1">
        <Box2 a={[[2, 0, 16, 20]]} b={[[12, 10, 22, 22]]} ac="#4b4b4b" bc="#5c5c5c" />
      </Seg>
      <Seg className="flex-1" last>
        <Box2 a={[[2, 0, 10, 10], [24, 26, 10, 8]]} b={[[8, 6, 20, 20]]} ac="#474747" bc="#5c5c5c" />
      </Seg>
    </TopGroup>
    <TopGroup className="ml-[35px] w-[77px]">
      <Seg className="flex-1" last>
        <svg width="32" height="30" viewBox="0 0 32 30">
          <rect x="0" y="0" width="1.6" height="30" fill="#aaa" />
          <rect x="4" y="6" width="28" height="8" fill="#4497e4" />
          <rect x="4" y="18" width="18" height="8" fill="#4497e4" />
        </svg>
      </Seg>
    </TopGroup>
    <TopGroup className="ml-[34px] w-[288px]">
      <Seg className="flex-1">
        <svg width="38" height="34" viewBox="0 0 38 34"><path d="M18 1 L1 33 H18 Z" fill="#4497e4" /><path d="M20 1 L37 33 H20 Z" fill="#8a8a8a" /></svg>
      </Seg>
      <Seg className="flex-1">
        <svg width="34" height="36" viewBox="0 0 34 36"><path d="M32 0 L1 15 H32 Z" fill="#4497e4" /><path d="M32 36 L1 20 H32 Z" fill="#8a8a8a" /></svg>
      </Seg>
      <Seg className="flex-1">
        <svg width="34" height="32" viewBox="0 0 34 32">
          <rect x="0" y="0" width="14" height="32" fill="#4497e4" />
          <rect x="18" y="18" width="16" height="14" fill="#8a8a8a" />
          <path d="M28 14 V6 H20 M23 2 L19 6 L23 10" stroke="#e8e8e8" strokeWidth="1.8" fill="none" />
        </svg>
      </Seg>
      <Seg className="flex-1" last>
        <svg width="34" height="32" viewBox="0 0 34 32">
          <rect x="0" y="0" width="14" height="32" fill="#4497e4" />
          <rect x="18" y="0" width="16" height="14" fill="#8a8a8a" />
          <path d="M28 18 V26 H20 M23 22 L19 26 L23 30" stroke="#e8e8e8" strokeWidth="1.8" fill="none" />
        </svg>
      </Seg>
    </TopGroup>
    <TopGroup className="ml-[34px] w-[218px]">
      <Seg className="flex-1">
        <svg width="36" height="32" viewBox="0 0 36 32"><rect x="12" y="12" width="22" height="20" fill="#4497e4" /><ellipse cx="13" cy="13" rx="13" ry="13" fill="#e6e6e6" stroke="#333" /></svg>
      </Seg>
      <Seg className="flex-1">
        <svg width="36" height="32" viewBox="0 0 36 32"><ellipse cx="13" cy="13" rx="13" ry="13" fill="#e6e6e6" /><rect x="12" y="10" width="22" height="22" fill="#4497e4" stroke="#333" /></svg>
      </Seg>
      <Seg className="flex-1" last>
        <svg width="36" height="32" viewBox="0 0 36 32"><circle cx="16" cy="16" r="16" fill="#e6e6e6" /><path d="M16 14 H32 A16 16 0 0 1 16 32 Z" fill="#4497e4" stroke="#333" /></svg>
      </Seg>
    </TopGroup>
  </div>
);

const serif = "[font-family:'Liberation_Serif',serif]";

const LowBar = () => (
  <div className="flex h-[59px] items-center bg-[#2f2f2f] pl-[26px] text-[24px] text-[#e2e2e2]">
    <DropBox text="Roboto" className="h-[41px] w-[295px]" arrow="w-[35px]" />
    <Well className="ml-[7px] h-[47px] w-[189px] justify-end pr-[10px]"><Updown /></Well>
    <Well className="ml-[9px] h-[41px] w-[144px] justify-end !pl-0">
      <span className="flex h-full w-[32px] items-center justify-center bg-[#363636] border-l border-[#262626]"><Tri /></span>
    </Well>
    <div className={"ml-[7px] flex h-[41px] w-[169px] overflow-hidden rounded-[5px] text-[30px] text-[#cfcfcf] shadow-[0_2px_0_#242424] " + serif}>
      <Seg dark className="w-[58px]">B</Seg>
      <Seg className="w-[53px] italic">I</Seg>
      <Seg last className="flex-1 underline">U</Seg>
    </div>
    <div className="ml-[14px] h-[34px] w-[68px] rounded-[2px] bg-[#e21a26] shadow-[0_2px_0_#232323]" />
    <VSep className="ml-[22px]" />
    <span className={"ml-[19px] w-[22px] text-center text-[30px] leading-[34px] underline text-[#bdbdbd] " + serif}>a</span>
    <DropBox text="[No Style]" className="ml-[10px] h-[41px] w-[236px]" arrow="w-[35px]" />
    <LowBtn className="ml-[5px] w-[66px]">
      <span className={"flex h-[32px] w-[32px] items-center justify-center rounded-full border-r-[2px] border-t-[2px] border-[#5c5c5c] text-[26px] text-[#7c7c7c] " + serif}>a</span>
    </LowBtn>
    <LowBtn className={"ml-[5px] w-[67px] text-[32px] text-[#e2e2e2] " + serif}>a</LowBtn>
    <span className={"ml-[15px] w-[12px] text-center text-[30px] text-[#bdbdbd] " + serif}>¶</span>
    <DropBox text="Heading 2" className="ml-[14px] h-[41px] w-[234px]" arrow="w-[32px]" />
    <LowBtn className="ml-[6px] w-[67px]">
      <span className={"flex h-[32px] w-[32px] items-center justify-center rounded-full border-r-[2px] border-t-[2px] border-[#5c5c5c] text-[26px] text-[#7c7c7c] " + serif}>¶</span>
    </LowBtn>
    <LowBtn className={"ml-[6px] w-[65px] text-[30px] " + serif}>¶</LowBtn>
    <VSep className="ml-[17px]" />
    <div className="ml-[15px] flex h-[41px] w-[254px] overflow-hidden rounded-[5px] shadow-[0_2px_0_#242424]">
      <Seg dark className="w-[58px]"><Lines widths={[22, 14, 22, 16, 22, 14]} step={6} w={24} /></Seg>
      <Seg className="w-[53px]"><Lines widths={[22, 14, 22, 16, 22, 14]} align="c" step={6} w={24} /></Seg>
      <Seg className="w-[54px]"><Lines widths={[22, 14, 22, 16, 22, 14]} align="r" step={6} w={24} /></Seg>
      <Seg className="w-[54px]"><Lines widths={[24, 24, 24, 24, 24, 16]} step={6} w={24} /></Seg>
      <Seg last className="flex-1"><Tri /></Seg>
    </div>
    <div className="ml-[5px] flex h-[41px] w-[88px] overflow-hidden rounded-[5px] shadow-[0_2px_0_#242424]">
      <Seg dark className="w-[58px]"><Lines widths={[16, 24, 12, 24, 12, 24, 16]} step={5} w={24} /></Seg>
      <Seg last className="flex-1"><Tri /></Seg>
    </div>
    <div className="ml-[6px] flex h-[41px] w-[117px] overflow-hidden rounded-[5px] shadow-[0_2px_0_#242424]">
      <Seg className="w-[58px]">
        <svg width="26" height="28" viewBox="0 0 26 28"><path d="M0 3 H4 M0 14 H4 M0 25 H4 M10 3 H25 M10 14 H25 M10 25 H25" stroke="#e6e6e6" strokeWidth="2.2" /></svg>
      </Seg>
      <Seg last className="flex-1">
        <svg width="26" height="30" viewBox="0 0 26 30">
          <text x="0" y="9" fontSize="10" fill="#e6e6e6">1</text>
          <text x="0" y="19" fontSize="10" fill="#e6e6e6">2</text>
          <text x="0" y="29" fontSize="10" fill="#e6e6e6">3</text>
          <path d="M10 5 H25 M10 15 H25 M10 26 H25" stroke="#e6e6e6" strokeWidth="2.2" />
        </svg>
      </Seg>
    </div>
    <DropBox text="[14 pt]" className="ml-[4px] h-[41px] w-[146px]" arrow="w-[34px]" />
    <VSep className="ml-[16px]" />
    <span className="ml-[32px] w-[105px] whitespace-nowrap">Columns:</span>
    <Well className="ml-[14px] h-[41px] w-[49px] pl-[6px]">1</Well>
    <Stepper className="ml-[4px] w-[22px]" />
    <Well className="ml-[5px] h-[41px] w-[118px] pl-[6px] text-[#6e6e6e]">8,5 mm</Well>
    <Stepper className="ml-[7px] w-[20px]" c="#777" />
    <VSep className="ml-[15px]" />
    <LowBtn className="ml-[15px] w-[66px]">
      <svg width="26" height="34" viewBox="0 0 26 34">
        <rect x="1" y="1" width="24" height="32" fill="none" stroke="#eee" strokeWidth="1.8" />
        <path d="M5 6 H11 M8 6 V13 M14 8 H21 M14 12 H21 M5 17 H21 M5 21 H21 M5 25 H21 M5 29 H21" stroke="#eee" strokeWidth="1.6" />
      </svg>
    </LowBtn>
    <LowBtn className={"ml-[5px] w-[67px] text-[30px] " + serif}>ﬁ</LowBtn>
    <VSep className="ml-[16px]" />
    <div className="ml-[14px] flex h-[41px] w-[225px] overflow-hidden rounded-[5px] shadow-[0_2px_0_#242424]">
      <Seg className="flex-1">
        <svg width="30" height="36" viewBox="0 0 30 36"><ellipse cx="15" cy="18" rx="10" ry="11" fill="none" stroke="#8a8a8a" strokeWidth="2" /><path d="M15 1 V35 M1 18 H29" stroke="#8a8a8a" strokeWidth="1.6" /></svg>
      </Seg>
      <Seg className="flex-1">
        <svg width="30" height="34" viewBox="0 0 30 34">
          <rect x="2" y="2" width="26" height="30" fill="none" stroke="#6a6a6a" strokeWidth="1.4" />
          <path d="M3 17 C9 8 21 8 27 17 C21 26 9 26 3 17 Z" fill="none" stroke="#999" strokeWidth="2" />
          <circle cx="15" cy="17" r="3.5" fill="#999" />
        </svg>
      </Seg>
      <Seg className="flex-1">
        <svg width="30" height="34" viewBox="0 0 30 34">
          <rect x="2" y="2" width="26" height="30" fill="none" stroke="#6a6a6a" strokeWidth="1.4" />
          <path d="M15 6 V28" stroke="#888" strokeWidth="1.4" />
          <path d="M6 12 L13 17 L6 22 Z M24 12 L17 17 L24 22 Z" fill="#999" />
        </svg>
      </Seg>
      <Seg className="flex-1" last>
        <svg width="32" height="34" viewBox="0 0 32 34">
          <path d="M18 9 V3 H31 V16 H26 M14 14 V8 H26 V20 H22" fill="none" stroke="#777" strokeWidth="1.6" />
          <rect x="3" y="10" width="16" height="22" fill="none" stroke="#eee" strokeWidth="1.4" strokeDasharray="3 3" />
          <circle cx="3" cy="10" r="2" fill="#eee" /><circle cx="19" cy="32" r="2" fill="#eee" /><circle cx="3" cy="32" r="2" fill="#eee" /><circle cx="19" cy="10" r="2" fill="#eee" />
        </svg>
      </Seg>
    </div>
    <LowBtn className="ml-[6px] w-[66px]">
      <svg width="30" height="34" viewBox="0 0 30 34">
        <rect x="2" y="2" width="26" height="30" fill="none" stroke="#6a6a6a" strokeWidth="1.4" />
        <path d="M8 14 C10 7 20 7 22 13 M22 20 C20 27 10 27 8 21" stroke="#999" strokeWidth="2.2" fill="none" />
        <path d="M24 8 V15 H17 M6 26 V19 H13" stroke="#999" strokeWidth="1.6" fill="none" />
      </svg>
    </LowBtn>
    <span className="ml-[45px] text-[30px] leading-none text-white">»</span>
  </div>
);

const StatusBar = () => (
  <div className="flex h-[42px] items-center pl-[24px] pt-[2px] text-[24.2px] text-[#cfcfcf]">
    <svg width="20" height="22" viewBox="0 0 20 22"><path d="M1 1 V21" stroke="#ddd" strokeWidth="2" /><path d="M19 1 L4 11 L19 21 Z" fill="#ddd" /></svg>
    <div className="ml-[19px]"><svg width="16" height="22" viewBox="0 0 16 22"><path d="M16 1 L1 11 L16 21 Z" fill="#ddd" /></svg></div>
    <span className="ml-[24px] w-[173px] whitespace-nowrap text-[23px] text-[#e6e6e6]">374,375 of 398</span>
    <div className="ml-[18px]"><svg width="16" height="22" viewBox="0 0 16 22"><path d="M0 1 L15 11 L0 21 Z" fill="#ddd" /></svg></div>
    <div className="ml-[18px]"><svg width="20" height="22" viewBox="0 0 20 22"><path d="M19 1 V21" stroke="#ddd" strokeWidth="2" /><path d="M1 1 L16 11 L1 21 Z" fill="#ddd" /></svg></div>
    <div className="ml-[19px]">
      <svg width="24" height="28" viewBox="0 0 24 28">
        <path d="M6 26 H23 V5" fill="none" stroke="#999" strokeWidth="1.6" />
        <rect x="1" y="1" width="18" height="24" fill="#2e2e2e" stroke="#eee" strokeWidth="1.8" />
        <path d="M4 7 H16 M4 11 H16 M4 15 H16 M4 19 H16" stroke="#eee" strokeWidth="1.6" />
      </svg>
    </div>
    <div className="ml-[28px]">
      <svg width="24" height="26" viewBox="0 0 24 26">
        <path d="M5 21 V10 C5 -1 19 -1 19 10 V21 Z" fill="#e8393f" />
        <path d="M9 6 C10 4 12 3 13 3 V18 H9 Z" fill="#f7797d" />
        <rect x="1" y="21" width="22" height="4" fill="#9a9a9a" />
      </svg>
    </div>
    <p className="ml-[29px] whitespace-nowrap">
      <b className="text-white">Drag</b> to resize selection. <b className="text-white">⇧</b> to maintain aspect ratio. <b className="text-white">⌘</b> to resize around the centre. <b className="text-white">^</b> to resize and rotate. <b className="text-white">⌥</b> to ignore snapping. <b className="text-white">Double-Click</b> to reset.
    </p>
  </div>
);

export default function App() {
  return (
    <div className="h-[2918px] w-[3638px] overflow-hidden bg-white pl-[111px] pt-[75px] text-[23px] leading-[28px] text-[#dcdcdc] [font-family:Inter,'Liberation_Sans','DejaVu_Sans',sans-serif]">
      <div className="flex h-[2698px] w-[3415px] flex-col overflow-hidden rounded-[14px] border border-[#161616] bg-[#2e2e2e] shadow-[0_40px_70px_rgba(0,0,0,0.75)]">
        <TopBar />
        <div className="h-[3px] bg-[#222]" />
        <LowBar />
        <div className="flex h-[2515px]">
          <ToolColumn />
          <div className="flex w-[528px] shrink-0 flex-col pt-[4px]">
            <LayersPanel />
            <div className="h-[4px] bg-[#2e2e2e]" />
            <ParagraphPanel />
            <ScrollPanel />
          </div>
          <div className="w-[4px] shrink-0" />
          <Canvas />
          <div className="w-[28px] shrink-0 pl-[7px] pt-[2316px]">
            <div className="h-[14px] w-[14px] rounded-full bg-[#4a4a4a]" />
          </div>
          <RightPanel />
        </div>
        <StatusBar />
      </div>
    </div>
  );
}
